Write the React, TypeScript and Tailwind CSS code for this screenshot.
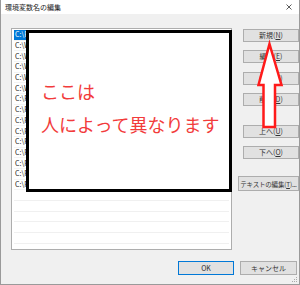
const paths = [
  'C:\\Program Files\\Common Files\\Oracle\\Java\\javapath',
  'C:\\WINDOWS\\system32',
  'C:\\WINDOWS',
  'C:\\WINDOWS\\System32\\Wbem',
  'C:\\WINDOWS\\System32\\WindowsPowerShell\\v1.0\\',
  'C:\\WINDOWS\\System32\\OpenSSH\\',
  'C:\\Program Files\\Git\\cmd',
  'C:\\Program Files\\nodejs\\',
  'C:\\Program Files\\dotnet\\',
  'C:\\Program Files\\PuTTY\\',
  'C:\\Program Files\\Docker\\Docker\\resources\\bin',
  'C:\\ProgramData\\DockerDesktop\\version-bin',
  'C:\\Program Files\\Microsoft SQL Server\\150\\Tools\\Binn\\',
  'C:\\Program Files\\Python39\\Scripts\\',
  'C:\\Program Files\\Python39\\',
];

const emptyRows = 6;

function Btn({
  label,
  k,
  tail = '',
  w = 'w-[56px]',
  h = 'h-[13px]',
  focus = false,
  tight = false,
}: {
  label: string;
  k?: string;
  tail?: string;
  w?: string;
  h?: string;
  focus?: boolean;
  tight?: boolean;
}) {
  return (
    <div
      className={`${w} ${h} flex items-center justify-center bg-[#e1e1e1] border ${
        focus ? 'border-[#0078d7]' : 'border-[#adadad]'
      } ${tight ? 'text-[6.5px] tracking-[-0.2px]' : 'text-[7px]'} leading-none text-[#333] whitespace-nowrap`}
    >
      {label}
      {k && (
        <>
          (<span className="underline">{k}</span>)
        </>
      )}
      {tail}
    </div>
  );
}

export default function App() {
  return (
    <div
      className="relative w-[300px] h-[285px] bg-[#f0f0f0] border-l border-r border-b border-[#9a9a9a] flex flex-col overflow-hidden"
      style={{ fontFamily: '"Noto Sans CJK JP", "Noto Sans", sans-serif' }}
    >
      {/* title bar */}
      <div className="h-[14px] bg-white flex items-center justify-between pl-[4px] pr-[7px]">
        <span className="text-[7px] leading-none text-[#222]">環境変数名の編集</span>
        <svg width="6" height="6" viewBox="0 0 6 6">
          <path d="M0.5 0.5 L5.5 5.5 M5.5 0.5 L0.5 5.5" stroke="#333" strokeWidth="0.8" />
        </svg>
      </div>

      <div className="flex pt-[14px] pl-[10px]">
        {/* list */}
        <div className="w-[222px] h-[222px] border border-[#adadad] bg-white pt-[1px] px-[2px] overflow-hidden">
          {paths.map((p, i) => (
            <div
              key={i}
              className={`h-[10.7px] flex items-center pl-[1px] text-[7px] leading-none whitespace-nowrap border-b border-[#f4f4f4] ${
                i === 0 ? 'bg-[#0078d7] text-white' : 'text-[#222]'
              }`}
            >
              {p}
            </div>
          ))}
          {Array.from({ length: emptyRows }).map((_, i) => (
            <div key={i} className="h-[10.7px] border-b border-[#f0f0f0]" />
          ))}
        </div>

        {/* buttons */}
        <div className="ml-[6px] w-[61px] flex flex-col items-end pt-[1px]">
          <div className="flex flex-col gap-[8.3px]">
            <Btn label="新規" k="N" />
            <Btn label="編集" k="E" />
            <Btn label="参照" k="B" />
            <Btn label="削除" k="D" />
          </div>
          <div className="flex flex-col gap-[8px] mt-[19.5px]">
            <Btn label="上へ" k="U" />
            <Btn label="下へ" k="O" />
          </div>
          <div className="mt-[17px]">
            <Btn label="テキストの編集" k="T" tail="..." w="w-[61px]" h="h-[15px]" tight />
          </div>
        </div>
      </div>

      {/* footer */}
      <div className="flex justify-end gap-[6px] pr-[2px] mt-[11px]">
        <Btn label="OK" w="w-[56px]" h="h-[14px]" focus />
        <Btn label="キャンセル" w="w-[57px]" h="h-[14px]" />
      </div>

      {/* resize grip */}
      <svg className="absolute right-[1px] bottom-[1px]" width="6" height="6" viewBox="0 0 6 6">
        <rect x="4" y="0" width="1" height="1" fill="#aaa" />
        <rect x="2" y="2" width="1" height="1" fill="#aaa" />
        <rect x="4" y="2" width="1" height="1" fill="#aaa" />
        <rect x="0" y="4" width="1" height="1" fill="#aaa" />
        <rect x="2" y="4" width="1" height="1" fill="#aaa" />
        <rect x="4" y="4" width="1" height="1" fill="#aaa" />
      </svg>

      {/* annotation box */}
      <div className="absolute left-[25px] top-[30px] w-[206px] h-[162px] border-[3px] border-black bg-white pl-[12px] pt-[42px] text-[18px] leading-[33px] text-[#f23b3b]">
        <div>ここは</div>
        <div>人によって異なります</div>
      </div>

      {/* red arrow */}
      <svg className="absolute left-0 top-0 pointer-events-none" width="300" height="285" viewBox="0 0 300 285">
        <polygon
          points="268.5,44 280.5,85 274,85 274,127 262.5,127 262.5,85 257.5,85"
          fill="white"
          stroke="#ff1a1a"
          strokeWidth="2.5"
          strokeLinejoin="miter"
        />
      </svg>
    </div>
  );
}
